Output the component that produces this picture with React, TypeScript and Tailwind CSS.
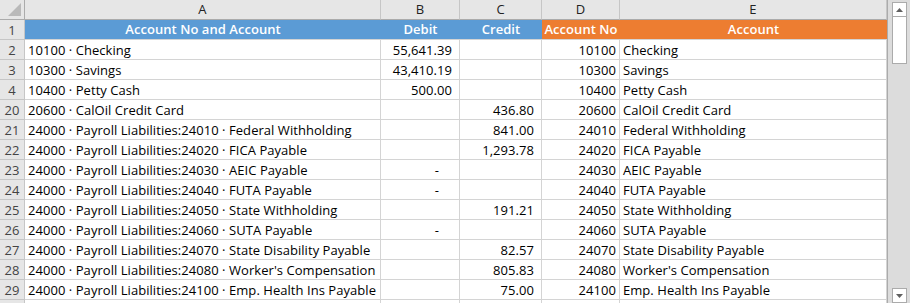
import React from "react";

type Row = { n: string; a: string; b?: string; c?: string; d: string; e: string; bDash?: boolean };

const P = "24000 · Payroll Liabilities:";
const rows: Row[] = [
  { n: "2", a: "10100 · Checking", b: "55,641.39", d: "10100", e: "Checking" },
  { n: "3", a: "10300 · Savings", b: "43,410.19", d: "10300", e: "Savings" },
  { n: "4", a: "10400 · Petty Cash", b: "500.00", d: "10400", e: "Petty Cash" },
  { n: "20", a: "20600 · CalOil Credit Card", c: "436.80", d: "20600", e: "CalOil Credit Card" },
  { n: "21", a: P + "24010 · Federal Withholding", c: "841.00", d: "24010", e: "Federal Withholding" },
  { n: "22", a: P + "24020 · FICA Payable", c: "1,293.78", d: "24020", e: "FICA Payable" },
  { n: "23", a: P + "24030 · AEIC Payable", bDash: true, d: "24030", e: "AEIC Payable" },
  { n: "24", a: P + "24040 · FUTA Payable", bDash: true, d: "24040", e: "FUTA Payable" },
  { n: "25", a: P + "24050 · State Withholding", c: "191.21", d: "24050", e: "State Withholding" },
  { n: "26", a: P + "24060 · SUTA Payable", bDash: true, d: "24060", e: "SUTA Payable" },
  { n: "27", a: P + "24070 · State Disability Payable", c: "82.57", d: "24070", e: "State Disability Payable" },
  { n: "28", a: P + "24080 · Worker's Compensation", c: "805.83", d: "24080", e: "Worker's Compensation" },
  { n: "29", a: P + "24100 · Emp. Health Ins Payable", c: "75.00", d: "24100", e: "Emp. Health Ins Payable" },
];

const cols = "grid grid-cols-[25px_356px_79px_82px_78px_267px]";
const cell = "h-5 border-r border-b border-[#d4d4d4] flex items-center pt-[2px] overflow-hidden whitespace-nowrap";
const rh = "h-5 border-r border-b border-[#c6c6c6] bg-[#e6e6e6] text-[#444444] flex items-center justify-center pt-[2px]";
const hdr = "h-5 border-b border-[#d4d4d4] text-white font-semibold flex items-center justify-center pt-[1px]";

export default function App() {
  return (
    <div
      className="w-[910px] h-[303px] overflow-hidden bg-white flex text-[13px] text-black tracking-[0.05px]"
      style={{ fontFamily: '"Open Sans", "Noto Sans", sans-serif' }}
    >
      <div className="w-[887px] flex flex-col">
        {/* column letters */}
        <div className={cols}>
          <div className="h-5 bg-[#e6e6e6] border-r border-b border-[#ababab] relative">
            <svg className="absolute right-[3px] bottom-[3px]" width="13" height="13" viewBox="0 0 13 13">
              <polygon points="13,0 13,13 0,13" fill="#b9b9b9" />
            </svg>
          </div>
          {["A", "B", "C", "D", "E"].map((l) => (
            <div
              key={l}
              className="h-5 bg-[#e6e6e6] border-r border-b border-r-[#c6c6c6] border-b-[#ababab] text-[#222222] flex items-center justify-center pt-[1px]"
            >
              {l}
            </div>
          ))}
        </div>
        {/* header row 1 */}
        <div className={cols}>
          <div className={rh}>1</div>
          <div className={`${hdr} bg-[#5b9bd5]`}>Account No and Account</div>
          <div className={`${hdr} bg-[#5b9bd5]`}>Debit</div>
          <div className={`${hdr} bg-[#5b9bd5]`}>Credit</div>
          <div className={`${hdr} bg-[#ed7d31]`}>Account No</div>
          <div className={`${hdr} bg-[#ed7d31]`}>Account</div>
        </div>
        {rows.map((r) => (
          <div key={r.n} className={cols}>
            <div className={rh}>{r.n}</div>
            <div className={`${cell} pl-[3px]`}>{r.a}</div>
            <div className={`${cell} justify-end pr-[7px]`}>
              {r.b ?? (r.bDash ? <span className="pr-[13px]">-</span> : "")}
            </div>
            <div className={`${cell} justify-end pr-[7px]`}>{r.c ?? ""}</div>
            <div className={`${cell} justify-end pr-[3px]`}>{r.d}</div>
            <div className={`${cell} pl-[3px]`}>{r.e}</div>
          </div>
        ))}
        <div className={cols}>
          <div className={rh}></div>
          <div className={cell}></div>
          <div className={cell}></div>
          <div className={cell}></div>
          <div className={cell}></div>
          <div className={cell}></div>
        </div>
      </div>
      {/* vertical scrollbar */}
      <div className="w-[23px] h-full border-l border-[#ababab] bg-[#dcdcdc] flex flex-col items-center pl-[1px] pt-[2px]">
        <div className="w-[15px] h-[15px] bg-white border border-[#ababab] flex items-center justify-center">
          <svg width="7" height="4" viewBox="0 0 7 4">
            <polygon points="3.5,0 7,4 0,4" fill="#606060" />
          </svg>
        </div>
        <div className="w-[15px] h-[48px] bg-white border border-[#ababab] -mt-px"></div>
        <div className="flex-1"></div>
        <div className="w-[15px] h-[15px] bg-white border border-[#ababab] flex items-center justify-center">
          <svg width="7" height="4" viewBox="0 0 7 4">
            <polygon points="0,0 7,0 3.5,4" fill="#606060" />
          </svg>
        </div>
      </div>
    </div>
  );
}
